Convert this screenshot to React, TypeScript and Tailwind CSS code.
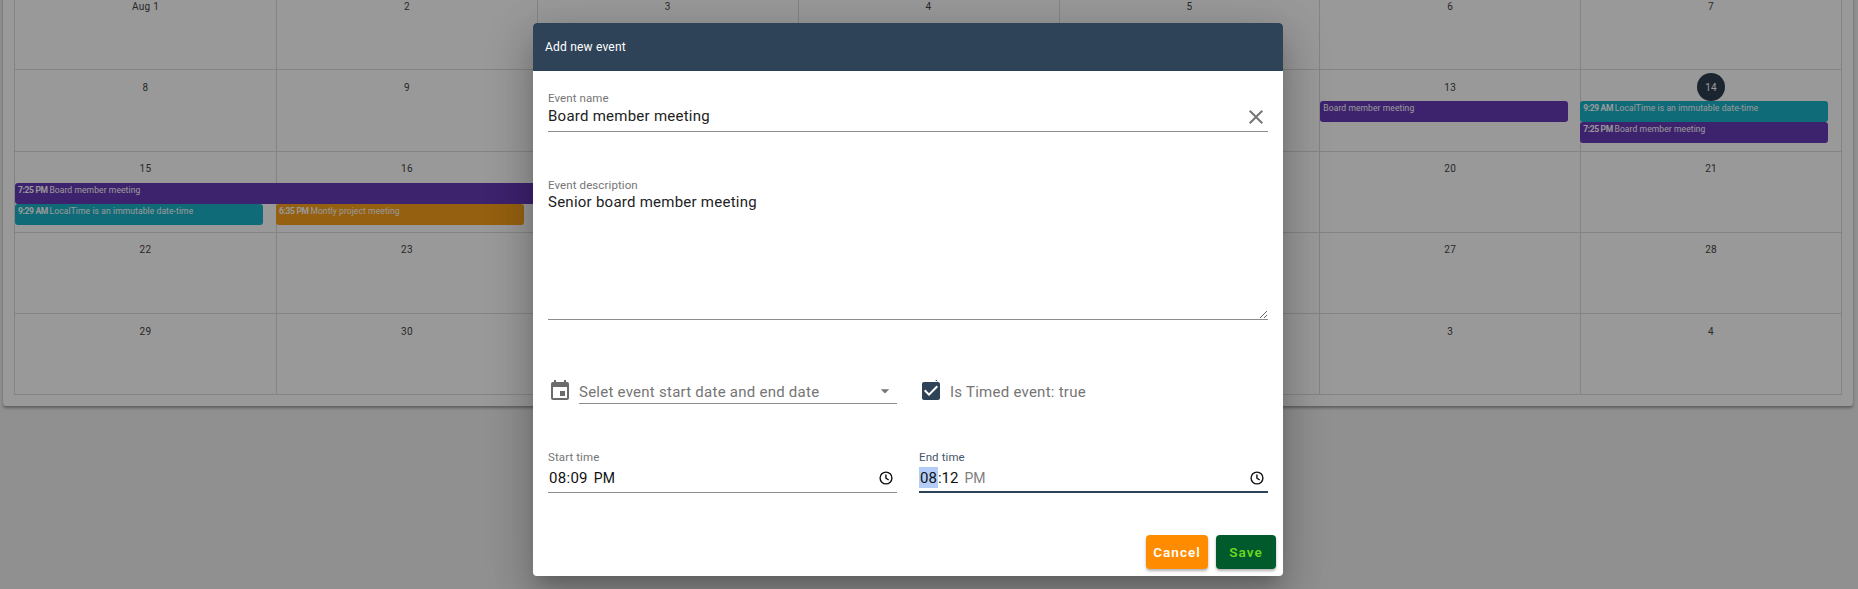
const weeks = [
  ["Aug 1", "2", "3", "4", "5", "6", "7"],
  ["8", "9", "10", "11", "12", "13", "14"],
  ["15", "16", "17", "18", "19", "20", "21"],
  ["22", "23", "24", "25", "26", "27", "28"],
  ["29", "30", "31", "Sep 1", "2", "3", "4"],
];

const PURPLE = "bg-[#673ab7]";
const TEAL = "bg-[#1ab3c9]";
const ORANGE = "bg-[#f9a01b]";

function Ev({ time, title, color, extra = "" }: { time?: string; title: string; color: string; extra?: string }) {
  return (
    <div className={`h-[21px] w-[248px] rounded-[3px] px-[3px] text-[8.5px] leading-[14px] tracking-[0.1px] text-white whitespace-nowrap ${color} ${extra}`}>
      {time && <b className="font-bold tracking-[-0.35px]">{time} </b>}
      {title}
    </div>
  );
}

function cellEvents(w: number, d: number) {
  if (w === 1 && d === 5) return <Ev title="Board member meeting" color={PURPLE} />;
  if (w === 1 && d === 6)
    return (
      <>
        <Ev time="9:29 AM" title="LocalTime is an immutable date-time" color={TEAL} extra="-ml-px" />
        <Ev time="7:25 PM" title="Board member meeting" color={PURPLE} extra="-ml-px" />
      </>
    );
  if (w === 2 && d === 0)
    return (
      <>
        <Ev time="7:25 PM" title="Board member meeting" color={PURPLE} extra="!w-[780px] relative" />
        <Ev time="9:29 AM" title="LocalTime is an immutable date-time" color={TEAL} />
      </>
    );
  if (w === 2 && d === 1)
    return (
      <>
        <div className="h-[21px]" />
        <Ev time="6:35 PM" title="Montly project meeting" color={ORANGE} extra="-ml-px" />
      </>
    );
  return null;
}

function Icon({ d, className }: { d: string; className: string }) {
  return (
    <svg viewBox="0 0 24 24" className={className} fill="currentColor">
      <path d={d} />
    </svg>
  );
}

function Clock() {
  return (
    <svg viewBox="0 0 16 16" className="h-4 w-4 shrink-0" fill="none" stroke="#111" strokeWidth="1.4">
      <circle cx="8" cy="8" r="5.9" />
      <path d="M7.9 4.4V8.2L10.7 10" />
    </svg>
  );
}

export default function App() {
  const font = { fontFamily: 'Roboto, "Noto Sans", sans-serif' };
  const label = "text-[11.5px] leading-4 tracking-[0.1px]";
  const value = "text-[15px] tracking-[0.25px]";
  return (
    <div className="relative h-[589px] w-[1858px] overflow-hidden bg-[#f0f0f0]" style={font}>
      <div className="ml-[3px] mt-[-23px] h-[429px] w-[1850px] rounded-[3px] bg-white px-[11px] pt-[12px] shadow-[0_2px_3px_rgba(0,0,0,0.35)]">
        <div className="grid w-[1828px] grid-cols-[262px_repeat(6,1fr)] border-l border-[#dcdcdc]">
          {weeks.map((week, w) =>
            week.map((day, d) => (
              <div key={`${w}-${d}`} className="h-[81.25px] border-b border-r border-[#dcdcdc]">
                <div className="mt-[3px] flex h-7 items-center justify-center text-[10px] tracking-[0.3px] text-[#444]">
                  {w === 1 && d === 6 ? (
                    <span className="flex h-7 w-7 items-center justify-center rounded-full bg-[#2c3e50] text-white">{day}</span>
                  ) : (
                    day
                  )}
                </div>
                {cellEvents(w, d)}
              </div>
            ))
          )}
        </div>
      </div>

      <div className="absolute inset-0 bg-black/40" />

      <div className="absolute left-[533px] top-[23px] flex h-[553px] w-[750px] flex-col overflow-hidden rounded-[4px] bg-white shadow-[0_11px_15px_-7px_rgba(0,0,0,0.2),0_24px_38px_3px_rgba(0,0,0,0.14),0_9px_46px_8px_rgba(0,0,0,0.12)]">
        <div className="flex h-12 shrink-0 items-center bg-[#2f4358] px-3 pb-px text-[12px] tracking-[0.2px] text-white">Add new event</div>

        <div className="flex-1 px-[15px] pt-[19px]">
          <div className={`${label} text-[#757575]`}>Event name</div>
          <div className="flex h-[26px] items-center border-b border-[#8c8c8c] pb-[4px]">
            <input readOnly value="Board member meeting" className={`min-w-0 flex-1 bg-transparent ${value} text-[#222] outline-none`} />
            <Icon className="h-6 w-6 shrink-0 text-[#757575]" d="M19 6.41L17.59 5 12 10.59 6.41 5 5 6.41 10.59 12 5 17.59 6.41 19 12 13.41 17.59 19 19 17.59 13.41 12z" />
          </div>

          <div className={`mt-[45px] ${label} text-[#757575]`}>Event description</div>
          <div className="flex border-b border-[#8c8c8c]">
            <textarea readOnly value="Senior board member meeting" className={`block h-[126px] w-full bg-transparent ${value} leading-[19px] text-[#222] outline-none`} />
          </div>

          <div className="mt-[59px] grid grid-cols-2 gap-[22px]">
            <div className="flex h-[25px] items-start">
              <Icon className="h-6 w-6 shrink-0 text-[#6b6b6b]" d="M17 12h-5v5h5v-5zM16 1v2H8V1H6v2H5c-1.11 0-1.99.9-1.99 2L3 19c0 1.1.89 2 2 2h14c1.1 0 2-.9 2-2V5c0-1.1-.9-2-2-2h-1V1h-2zm3 18H5V8h14v11z" />
              <div className={`ml-[7px] flex h-[25px] flex-1 items-center justify-between border-b border-[#8c8c8c] ${value} text-[#757575]`}>
                <span className="pt-[3px]">Selet event start date and end date</span>
                <Icon className="mr-[2px] h-5 w-5 text-[#757575]" d="M7 10l5 5 5-5z" />
              </div>
            </div>
            <div className="flex h-[25px] items-start">
              <Icon className="h-6 w-6 shrink-0 text-[#2f4358]" d="M19 3H5c-1.11 0-2 .9-2 2v14c0 1.1.89 2 2 2h14c1.1 0 2-.9 2-2V5c0-1.1-.9-2-2-2h-1V1h-2zm-9 14l-5-5 1.41-1.41L10 14.17l7.59-7.59L19 8l-9 9z" />
              <span className={`ml-[7px] flex h-[26px] items-center ${value} text-[#757575]`}>Is Timed event: true</span>
            </div>
          </div>

          <div className="mt-[45px] grid grid-cols-2 gap-[22px]">
            <div>
              <div className={`${label} text-[#757575]`}>Start time</div>
              <div className="flex h-[28px] items-center justify-between border-b border-[#8c8c8c] pb-px pl-px pr-[3px] text-[15px] tracking-[0.3px] text-[#111]">
                <span>
                  08:09<span className="ml-[6px] text-[14px] tracking-normal">PM</span>
                </span>
                <Clock />
              </div>
            </div>
            <div>
              <div className={`${label} text-[#44566c]`}>End time</div>
              <div className="flex h-[28px] items-center justify-between border-b-2 border-[#2f4358] pr-[3px] text-[15px] text-[#111]">
                <span>
                  <span className="bg-[#b4cdf8] px-px py-[1.5px]">08</span>:12<span className="ml-[6px] text-[14px] text-[#808080]">PM</span>
                </span>
                <Clock />
              </div>
            </div>
          </div>
        </div>

        <div className="flex justify-end gap-2 pb-[7px] pr-[7px]">
          <button className="h-[34px] w-[62px] rounded-[4px] bg-[#ff8c00] text-[13.5px] font-semibold tracking-[1px] text-white shadow-[0_2px_3px_rgba(0,0,0,0.3)]">Cancel</button>
          <button className="h-[34px] w-[60px] rounded-[4px] bg-[#005a2b] text-[13.5px] font-semibold tracking-[1.1px] text-[#6cd81f] shadow-[0_2px_3px_rgba(0,0,0,0.3)]">Save</button>
        </div>
      </div>
    </div>
  );
}
